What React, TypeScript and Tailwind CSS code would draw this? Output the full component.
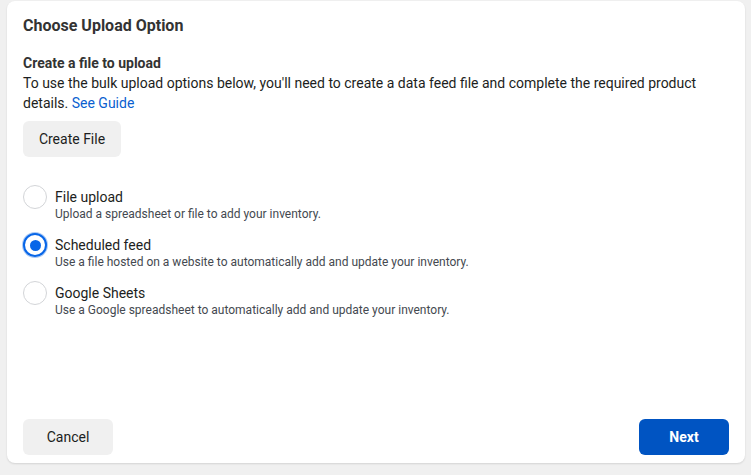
import { useState } from "react";

const options = [
  { id: "file", label: "File upload", desc: "Upload a spreadsheet or file to add your inventory." },
  { id: "feed", label: "Scheduled feed", desc: "Use a file hosted on a website to automatically add and update your inventory." },
  { id: "sheets", label: "Google Sheets", desc: "Use a Google spreadsheet to automatically add and update your inventory." },
];

function Radio({ checked }: { checked: boolean }) {
  if (checked) {
    return (
      <span className="flex h-6 w-6 shrink-0 items-center justify-center rounded-full border-2 border-[#0866e8] bg-white ring-1 ring-[#a9c9f5]">
        <span className="h-[11px] w-[11px] rounded-full bg-[#0866e8]" />
      </span>
    );
  }
  return <span className="h-6 w-6 shrink-0 rounded-full border border-[#d3d5d8] bg-white" />;
}

export default function App() {
  const [selected, setSelected] = useState("feed");

  return (
    <div className="h-[475px] w-[751px] bg-[#f0f0f0] pt-px pl-[7px] font-['Roboto','Liberation_Sans',sans-serif] text-[#1c1e21]">
      <div className="flex h-[462px] w-[738px] flex-col rounded-lg bg-white px-4 pt-[15px] pb-2 shadow-[0_1px_2px_rgba(0,0,0,0.12)]">
        <h1 className="text-base leading-5 font-bold text-[#333]">Choose Upload Option</h1>

        <div className="mt-[17px]">
          <div className="text-sm leading-5 font-bold text-[#333]">Create a file to upload</div>
          <p className="text-sm leading-5 text-[#1c1e21]">
            To use the bulk upload options below, you'll need to create a data feed file and complete the required product
            details. <a className="text-[#0a5fd0]">See Guide</a>
          </p>
          <button className="mt-2 h-9 w-[98px] rounded-md bg-[#f0f0f0] text-sm text-[#1c1e21]">Create File</button>
        </div>

        <div className="mt-7 flex flex-col gap-[11px]">
          {options.map((o) => (
            <label key={o.id} className="flex cursor-pointer items-start gap-2" onClick={() => setSelected(o.id)}>
              <Radio checked={selected === o.id} />
              <div className="mt-[3px] flex flex-col">
                <span className="text-sm leading-[18px] text-[#1c1e21]">{o.label}</span>
                <span className="text-xs leading-4 text-[#444950]">{o.desc}</span>
              </div>
            </label>
          ))}
        </div>

        <div className="mt-auto flex items-center justify-between">
          <button className="h-9 w-[90px] rounded-md bg-[#f0f0f0] text-sm text-[#1c1e21]">Cancel</button>
          <button className="h-9 w-[90px] rounded-md bg-[#0054c2] text-sm font-bold text-white">Next</button>
        </div>
      </div>
    </div>
  );
}
